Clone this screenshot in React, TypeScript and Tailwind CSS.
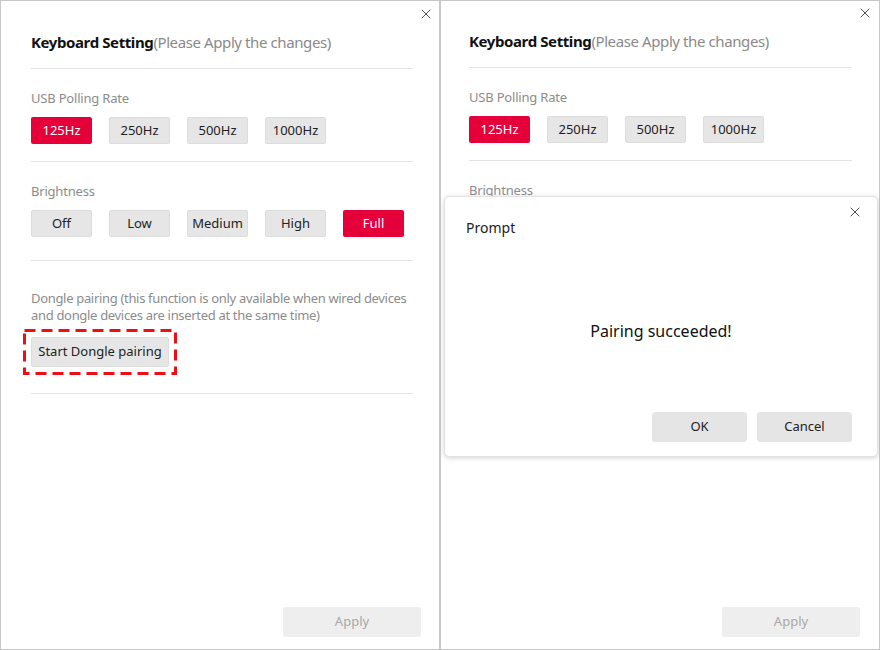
import { X } from "lucide-react";

const font = { fontFamily: '"Noto Sans", "Liberation Sans", sans-serif' };

const rates = ["125Hz", "250Hz", "500Hz", "1000Hz"];
const levels = ["Off", "Low", "Medium", "High", "Full"];

function OptionButton({ label, active }: { label: string; active?: boolean }) {
  return (
    <button
      type="button"
      className={
        active
          ? "flex h-[27px] w-[61px] items-center justify-center rounded-[2px] bg-[#e5003a] text-[13px] text-white"
          : "flex h-[27px] w-[61px] items-center justify-center rounded-[2px] border border-[#dcdcdc] bg-[#e6e6e6] text-[13px] text-[#222]"
      }
    >
      {label}
    </button>
  );
}

function Divider() {
  return <div className="h-px w-full bg-[#e3e3e3]" />;
}

function SettingsPanel({ highlight }: { highlight?: boolean }) {
  return (
    <div className="flex h-full flex-col">
      <div className="flex h-[20px] items-center text-[15px] tracking-[-0.4px]">
        <span className="font-bold text-[#111]">Keyboard Setting</span>
        <span className="text-[#8a8a8a]">(Please Apply the changes)</span>
      </div>
      <div className="mt-[16px]">
        <Divider />
      </div>

      <p className="mt-[20px] h-[18px] text-[13px] leading-[18px] tracking-[-0.2px] text-[#8c8c8c]">
        USB Polling Rate
      </p>
      <div className="mt-[10px] flex gap-[17px]">
        {rates.map((rate, i) => (
          <OptionButton active={i === 0} key={rate} label={rate} />
        ))}
      </div>
      <div className="mt-[17px]">
        <Divider />
      </div>

      <p className="mt-[20px] h-[18px] text-[13px] leading-[18px] tracking-[-0.2px] text-[#8c8c8c]">Brightness</p>
      <div className="mt-[10px] flex gap-[17px]">
        {levels.map((level, i) => (
          <OptionButton active={i === levels.length - 1} key={level} label={level} />
        ))}
      </div>
      <div className="mt-[23px]">
        <Divider />
      </div>

      <p className="mt-[29px] w-[386px] text-[13px] leading-[16.5px] tracking-[-0.32px] text-[#8c8c8c]">
        Dongle pairing (this function is only available when wired devices and dongle devices are inserted
        at the same time)
      </p>
      <div className="relative mt-[6px] -ml-[8px] self-start p-[8px]">
        {highlight && (
          <svg className="absolute inset-0 h-full w-full" preserveAspectRatio="none">
            <rect
              x="1.5"
              y="1.5"
              width="calc(100% - 3px)"
              height="calc(100% - 3px)"
              fill="none"
              stroke="#ee0f16"
              strokeWidth="3"
              strokeDasharray="11 6"
            />
          </svg>
        )}
        <button
          type="button"
          className="flex h-[30px] w-[138px] items-center justify-center rounded-[2px] border border-[#dcdcdc] bg-[#e6e6e6] text-[13px] text-[#222]"
        >
          Start Dongle pairing
        </button>
      </div>
      <div className="mt-[18px]">
        <Divider />
      </div>

      <div className="mt-auto flex justify-end pb-[12px]">
        <button
          type="button"
          className="-mr-[8px] flex h-[30px] w-[138px] items-center justify-center rounded-[2px] bg-[#eeeeee] text-[13px] text-[#a8a8a8]"
        >
          Apply
        </button>
      </div>
    </div>
  );
}

function PromptDialog() {
  return (
    <div className="absolute left-[3px] top-[195px] flex h-[261px] w-[434px] flex-col rounded-[5px] border border-[#e2e2e2] bg-white px-[21px] shadow-[0_1px_5px_rgba(0,0,0,0.18)]">
      <X className="absolute right-[14px] top-[7px] size-[16px] text-[#333]" strokeWidth={1.3} />
      <p className="mt-[21px] text-[14px] leading-[20px] text-[#222]">Prompt</p>
      <p className="mt-[82px] text-center text-[16px] leading-[22px] text-[#111]">Pairing succeeded!</p>
      <div className="mt-auto mb-[14px] flex justify-end gap-[10px] pr-[4px]">
        <button
          type="button"
          className="flex h-[30px] w-[95px] items-center justify-center rounded-[3px] bg-[#e5e5e5] text-[13px] text-[#222]"
        >
          OK
        </button>
        <button
          type="button"
          className="flex h-[30px] w-[95px] items-center justify-center rounded-[3px] bg-[#e5e5e5] text-[13px] text-[#222]"
        >
          Cancel
        </button>
      </div>
    </div>
  );
}

export default function App() {
  return (
    <div className="flex h-[650px] w-[880px] bg-white" style={font}>
      <section className="relative h-full w-[440px] border border-[#c8c8c8] pl-[30px] pr-[26px] pt-[31px]">
        <X className="absolute right-[5px] top-[5px] size-[16px] text-[#333]" strokeWidth={1.3} />
        <SettingsPanel highlight />
      </section>
      <section className="relative h-full w-[440px] border border-[#c8c8c8] pl-[28px] pr-[27px] pt-[30px]">
        <X className="absolute right-[6px] top-[4px] size-[16px] text-[#333]" strokeWidth={1.3} />
        <SettingsPanel />
        <PromptDialog />
      </section>
    </div>
  );
}
